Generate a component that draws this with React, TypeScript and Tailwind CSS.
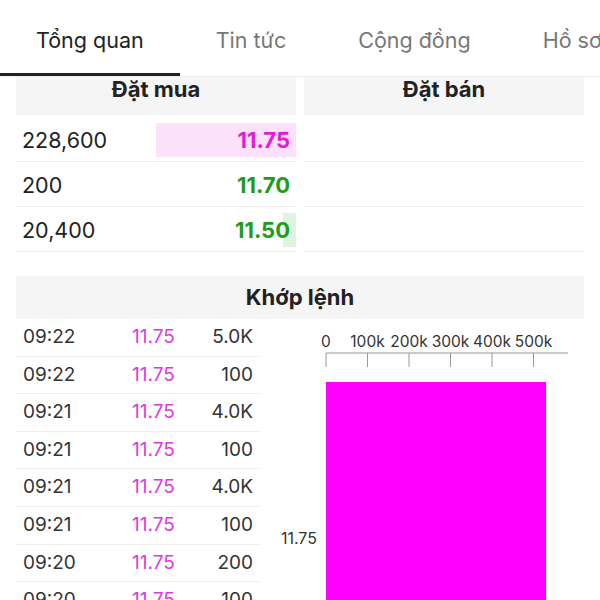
import React from "react";

const tabs = ["Tổng quan", "Tin tức", "Cộng đồng", "Hồ sơ"];

const bids = [
  { qty: "228,600", price: "11.75", color: "text-[#e31bd6]", bar: 140, barColor: "bg-[#fde0fa]" },
  { qty: "200", price: "11.70", color: "text-[#1c9e1c]", bar: 0, barColor: "bg-[#dff3df]" },
  { qty: "20,400", price: "11.50", color: "text-[#1c9e1c]", bar: 13, barColor: "bg-[#dff3df]" },
];

const trades = [
  ["09:22", "11.75", "5.0K"],
  ["09:22", "11.75", "100"],
  ["09:21", "11.75", "4.0K"],
  ["09:21", "11.75", "100"],
  ["09:21", "11.75", "4.0K"],
  ["09:21", "11.75", "100"],
  ["09:20", "11.75", "200"],
  ["09:20", "11.75", "100"],
];

function VolumeChart() {
  const ticks = [0, 100, 200, 300, 400, 500];
  return (
    <svg width="324" height="400" viewBox="0 0 324 400" className="block">
      {ticks.map((t, i) => {
        const x = 66 + i * 41.5;
        return (
          <g key={t}>
            <line x1={x} x2={x} y1={34} y2={48} stroke="#999" strokeWidth="1" />
            <text x={x} y={28} textAnchor="middle" fontSize="15.5" fill="#333" fontFamily="Inter, sans-serif">
              {t === 0 ? "0" : `${t}k`}
            </text>
          </g>
        );
      })}
      <line x1={66} x2={308} y1={34} y2={34} stroke="#999" strokeWidth="1" />
      <rect x={66} y={63} width={220} height={320} fill="#ff00ff" />
      <text x={57} y={225} textAnchor="end" fontSize="16" fill="#333" fontFamily="Inter, sans-serif">
        11.75
      </text>
    </svg>
  );
}

export default function App() {
  return (
    <div className="w-[600px] h-[600px] overflow-hidden bg-white text-[#222]" style={{ fontFamily: "Inter, 'Noto Sans', sans-serif" }}>
      <div className="flex h-[77px] border-b border-[#eee] whitespace-nowrap">
        {tabs.map((t, i) => (
          <div
            key={t}
            className={`relative shrink-0 flex items-center px-[36px] pt-[4px] text-[21.5px] ${i === 0 ? "text-[#222]" : "text-[#777]"}`}
          >
            {t}
            {i === 0 && <div className="absolute left-0 right-0 bottom-0 h-[3px] bg-[#222]" />}
          </div>
        ))}
      </div>

      <div className="px-4 flex gap-2">
        <div className="flex-1">
          <div className="h-[38px] bg-[#f5f5f5] text-center text-[22px] leading-[24px] font-bold">Đặt mua</div>
          <div className="mt-[2px]">
            {bids.map((b) => (
              <div key={b.qty} className="relative h-[45px] border-b border-[#f0f0f0] flex items-center justify-between px-[6px] pt-[2px]">
                {b.bar > 0 && (
                  <div className={`absolute right-0 top-[6px] h-[34px] ${b.barColor}`} style={{ width: b.bar }} />
                )}
                <span className="relative text-[21.5px]">{b.qty}</span>
                <span className={`relative text-[22px] font-bold ${b.color}`}>{b.price}</span>
              </div>
            ))}
          </div>
        </div>
        <div className="flex-1">
          <div className="h-[38px] bg-[#f5f5f5] text-center text-[22px] leading-[24px] font-bold">Đặt bán</div>
          <div className="mt-[2px]">
            {bids.map((b) => (
              <div key={b.qty} className="h-[45px] border-b border-[#f0f0f0]" />
            ))}
          </div>
        </div>
      </div>

      <div className="px-4 mt-[24px]">
        <div className="h-[43px] bg-[#f5f5f5] flex items-center justify-center text-[22px] font-bold">Khớp lệnh</div>
        <div className="flex">
          <div className="w-[244px]">
            {trades.map((r, i) => (
              <div key={i} className="h-[37.6px] border-b border-[#f0f0f0] flex items-center text-[19px]">
                <span className="w-[116px] pl-[7px] text-[#333]">{r[0]}</span>
                <span className="text-[#dc3bdc]">{r[1]}</span>
                <span className="flex-1 text-right pr-[7px] text-[#333]">{r[2]}</span>
              </div>
            ))}
          </div>
          <VolumeChart />
        </div>
      </div>
    </div>
  );
}
